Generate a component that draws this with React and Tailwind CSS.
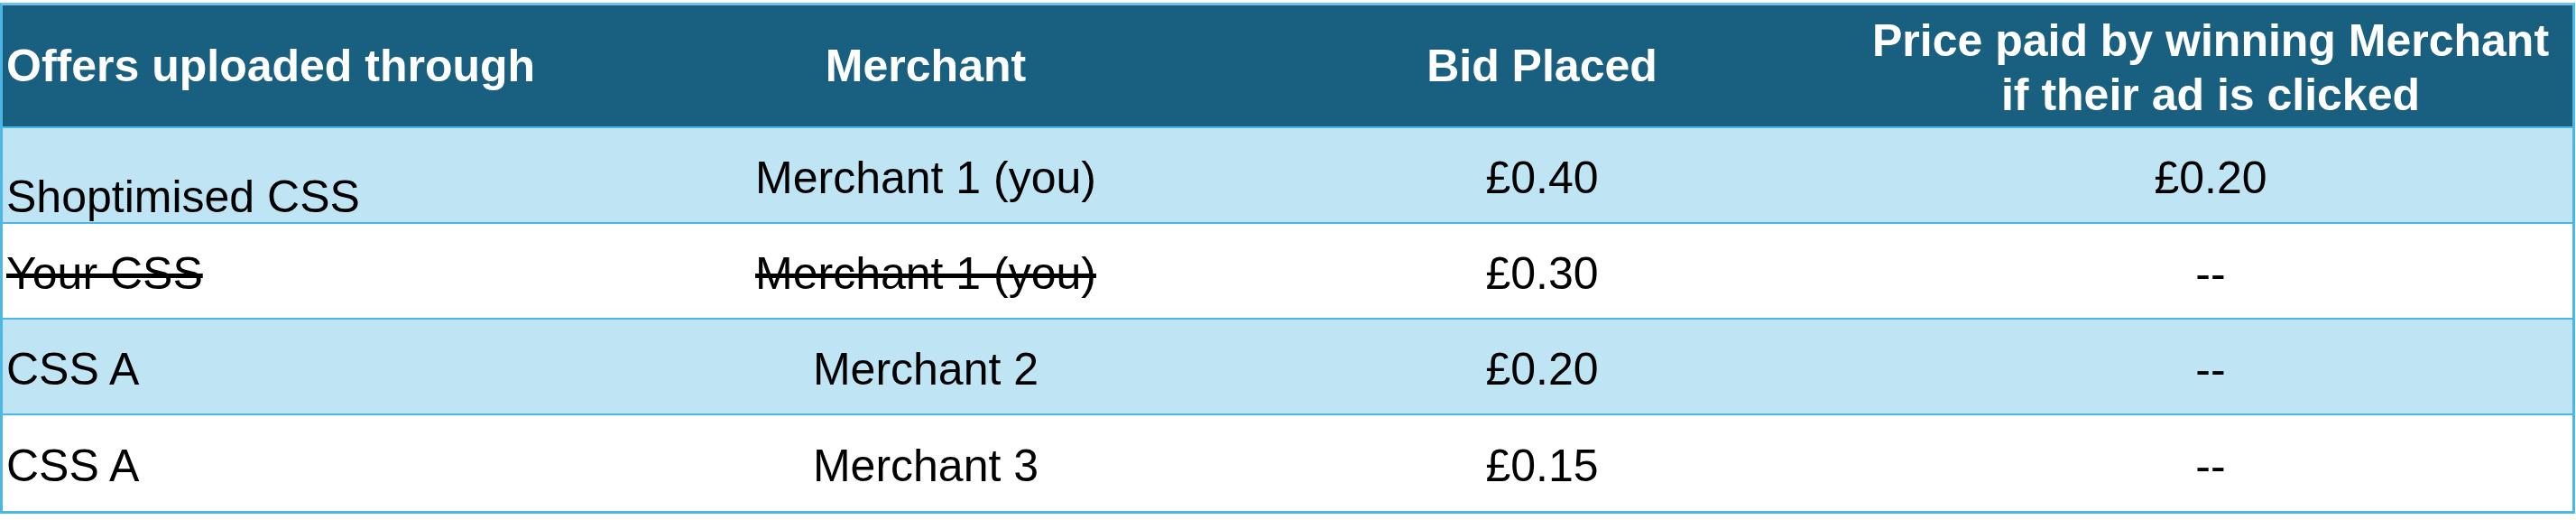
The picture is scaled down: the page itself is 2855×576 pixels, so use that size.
import React from "react";

const rows = [
    { via: "Shoptimised CSS", merchant: "Merchant 1 (you)", bid: "£0.40", price: "£0.20", shaded: true, bottom: true },
    { via: "Your CSS", merchant: "Merchant 1 (you)", bid: "£0.30", price: "--", struck: true },
    { via: "CSS A", merchant: "Merchant 2", bid: "£0.20", price: "--", shaded: true },
    { via: "CSS A", merchant: "Merchant 3", bid: "£0.15", price: "--" },
];

const cols = "grid grid-cols-[680px_686px_680px_1fr]";

const App = () => {
    return (
        <div className="pt-[3px] bg-white" style={{ fontFamily: '"Liberation Sans", Arial, sans-serif' }}>
            <div className="w-[2854px] border-[3px] border-[#4cb6e6] border-t-[#6cc2ea]">
                {/* header */}
                <div className={`${cols} h-[136px] bg-[#185f80] text-white font-bold text-[50px] leading-[60px] border-b-2 border-[#4cb6e6]`}>
                    <div className="flex items-center pl-[4px] whitespace-nowrap">Offers uploaded through</div>
                    <div className="flex items-center justify-center">Merchant</div>
                    <div className="flex items-center justify-center">Bid Placed</div>
                    <div className="flex items-center justify-center text-center pt-[4px]">
                        Price paid by winning Merchant
                        <br />
                        if their ad is clicked
                    </div>
                </div>

                {/* rows */}
                {rows.map((r, i) => (
                    <div
                        key={i}
                        className={`${cols} h-[106px] text-black text-[50px] leading-[56px] ${r.shaded ? "bg-[#bfe4f4]" : "bg-white"} ${i < rows.length - 1 ? "border-b-2 border-[#4cb6e6]" : ""}`}
                    >
                        <div className={`flex pl-[4px] whitespace-nowrap ${r.bottom ? "items-end" : "items-center pt-[5px]"} ${r.struck ? "line-through" : ""}`}>
                            {r.via}
                        </div>
                        <div className={`flex items-center justify-center pt-[5px] whitespace-nowrap ${r.struck ? "line-through" : ""}`}>
                            {r.merchant}
                        </div>
                        <div className="flex items-center justify-center pt-[5px]">{r.bid}</div>
                        <div className="flex items-center justify-center pt-[5px]">{r.price}</div>
                    </div>
                ))}
            </div>
        </div>
    );
};

export default App;
